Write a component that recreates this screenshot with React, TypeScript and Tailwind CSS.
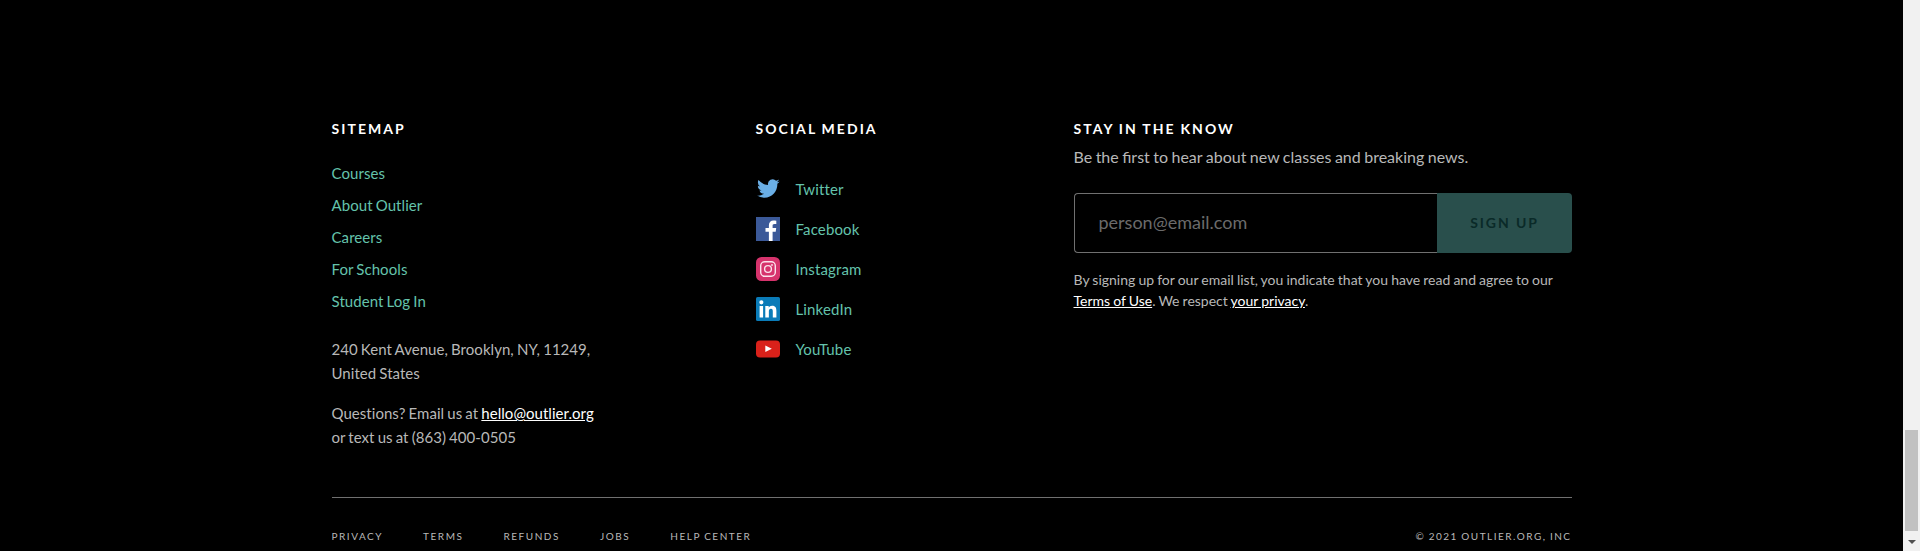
import React from 'react';

const siteLinks = ['Courses', 'About Outlier', 'Careers', 'For Schools', 'Student Log In'];

const TwitterIcon = () => (
  <svg viewBox="0 0 24 24" className="size-6">
    <path
      fill="#6aaee5"
      d="M23.643 4.437c-.835.37-1.732.62-2.675.733a4.67 4.67 0 0 0 2.048-2.578 9.3 9.3 0 0 1-2.958 1.13 4.66 4.66 0 0 0-7.938 4.25 13.229 13.229 0 0 1-9.602-4.868c-.4.69-.63 1.49-.63 2.342A4.66 4.66 0 0 0 3.96 9.324a4.647 4.647 0 0 1-2.11-.583v.06a4.66 4.66 0 0 0 3.737 4.568 4.692 4.692 0 0 1-2.104.08 4.661 4.661 0 0 0 4.352 3.234 9.348 9.348 0 0 1-5.786 1.995 9.5 9.5 0 0 1-1.112-.065 13.175 13.175 0 0 0 7.14 2.093c8.57 0 13.255-7.098 13.255-13.254 0-.2-.005-.402-.014-.602a9.47 9.47 0 0 0 2.323-2.41z"
    />
  </svg>
);

const FacebookIcon = () => (
  <svg viewBox="0 0 24 24" className="size-6">
    <path fill="#3b5998" d="M0 0h24v24H0z" />
    <path
      fill="#fff"
      d="M12.9 24v-9.3H9.5V11h3.4V8.3c0-3 1.9-4.7 4.6-4.7 1.3 0 2.4.1 2.8.2v3.3h-1.9c-1.5 0-1.8.7-1.8 1.8V11h3.6l-.5 3.7h-3.1V24z"
    />
  </svg>
);

const InstagramIcon = () => (
  <svg viewBox="0 0 24 24" className="size-6">
    <rect width="24" height="24" rx="5.5" fill="#d6336c" />
    <rect x="4.7" y="4.7" width="14.6" height="14.6" rx="4" fill="none" stroke="#fbe3ec" strokeWidth="1.4" />
    <circle cx="12" cy="12" r="3.4" fill="none" stroke="#fbe3ec" strokeWidth="1.4" />
    <circle cx="16" cy="8" r="0.9" fill="#fbe3ec" />
  </svg>
);

const LinkedInIcon = () => (
  <svg viewBox="0 0 24 24" className="size-6">
    <rect width="24" height="24" rx="1.6" fill="#0a7bb8" />
    <path
      fill="#fff"
      d="M3.6 9h3.5v11.4H3.6zM5.35 3.3a2.05 2.05 0 1 1 0 4.1 2.05 2.05 0 0 1 0-4.1zM9.3 9h3.4v1.6h.05c.5-.9 1.65-1.85 3.35-1.85 3.6 0 4.3 2.35 4.3 5.4v6.25h-3.6v-5.55c0-1.3 0-3-1.85-3s-2.1 1.45-2.1 2.95v5.6H9.3z"
    />
  </svg>
);

const YouTubeIcon = () => (
  <svg viewBox="0 0 24 24" className="size-6">
    <rect y="3.5" width="24" height="17" rx="4" fill="#d9211a" />
    <path fill="#fff" d="M9.3 8.6v6.4l6.5-3.2z" />
  </svg>
);

const socials = [
  { name: 'Twitter', Icon: TwitterIcon },
  { name: 'Facebook', Icon: FacebookIcon },
  { name: 'Instagram', Icon: InstagramIcon },
  { name: 'LinkedIn', Icon: LinkedInIcon },
  { name: 'YouTube', Icon: YouTubeIcon },
];

const legalLinks = ['Privacy', 'Terms', 'Refunds', 'Jobs', 'Help Center'];

const Heading = ({ children }: { children: React.ReactNode }) => (
  <h2 className="text-[14px] leading-5 font-bold tracking-[2.05px] text-white uppercase">{children}</h2>
);

export default function App() {
  return (
    <div className="flex h-[551px] overflow-hidden bg-black font-['Lato',sans-serif] text-[#b8b8b8]">
      <footer className="flex flex-1 justify-center">
        <div className="flex w-[1240px] flex-col pt-[119px] [word-spacing:-0.04em]">
          <div className="flex h-[378px]">
            <section className="w-[424px]">
              <Heading>Sitemap</Heading>
              <ul className="mt-[18px]">
                {siteLinks.map((l) => (
                  <li key={l} className="text-[15px] leading-8 tracking-[0.08px] [word-spacing:-0.06em] text-[#64c3ac]">
                    <a href="#">{l}</a>
                  </li>
                ))}
              </ul>
              <p className="mt-5 text-[15px] leading-6 tracking-[0.04px] [word-spacing:-0.05em]">
                240 Kent Avenue, Brooklyn, NY, 11249,
                <br />
                United States
              </p>
              <p className="mt-4 text-[15px] leading-6 tracking-[0.04px] [word-spacing:-0.05em]">
                Questions? Email us at{' '}
                <a href="#" className="text-white underline">hello@outlier.org</a>
                <br />
                or text us at (863) 400-0505
              </p>
            </section>
            <section className="w-[318px]">
              <Heading>Social Media</Heading>
              <ul className="mt-[38px] flex flex-col gap-4">
                {socials.map(({ name, Icon }) => (
                  <li key={name} className="flex h-6 items-center gap-4 text-[15px] leading-6 tracking-[0.15px] text-[#64c3ac]">
                    <Icon />
                    <a href="#">{name}</a>
                  </li>
                ))}
              </ul>
            </section>
            <section className="w-[498px]">
              <Heading>Stay in the know</Heading>
              <p className="mt-1.5 text-[16px] leading-6 [word-spacing:-0.04em]">
                Be the first to hear about new classes and breaking news.
              </p>
              <form className="mt-6 flex h-[60px]">
                <input
                  type="email"
                  placeholder="person@email.com"
                  className="w-[363px] rounded-l-[4px] border border-r-0 border-[#707070] bg-black px-6 pb-0.5 text-[18px] placeholder:text-[#6b6b6b]"
                />
                <button
                  type="button"
                  className="flex-1 rounded-r-[4px] bg-[#294f4c] pb-0.5 pl-px text-[14px] font-bold tracking-[1.9px] text-[#0a2a28] uppercase"
                >
                  Sign up
                </button>
              </form>
              <p className="mt-4 text-[14px] leading-[21px] [word-spacing:-0.035em]">
                By signing up for our email list, you indicate that you have read and agree to our{' '}
                <a href="#" className="text-white underline">Terms of Use</a>. We respect{' '}
                <a href="#" className="text-white underline">your privacy</a>.
              </p>
            </section>
          </div>
          <div className="flex justify-between border-t border-[#707070] pt-[30px] text-[10px] leading-4 tracking-[1.54px] uppercase">
            <nav className="flex gap-10">
              {legalLinks.map((l) => (
                <a key={l} href="#">{l}</a>
              ))}
            </nav>
            <span className="tracking-[1.5px]">© 2021 Outlier.org, Inc</span>
          </div>
        </div>
      </footer>
      <div className="flex w-[17px] flex-col items-center justify-end bg-[#f1f1f1]">
        <div className="h-[101px] w-[13px] bg-[#c1c1c1]" />
        <div className="flex h-5 items-center pt-0.5">
          <svg viewBox="0 0 8 4" className="h-1 w-2">
            <path fill="#505050" d="M0 0h8L4 4z" />
          </svg>
        </div>
      </div>
    </div>
  );
}
